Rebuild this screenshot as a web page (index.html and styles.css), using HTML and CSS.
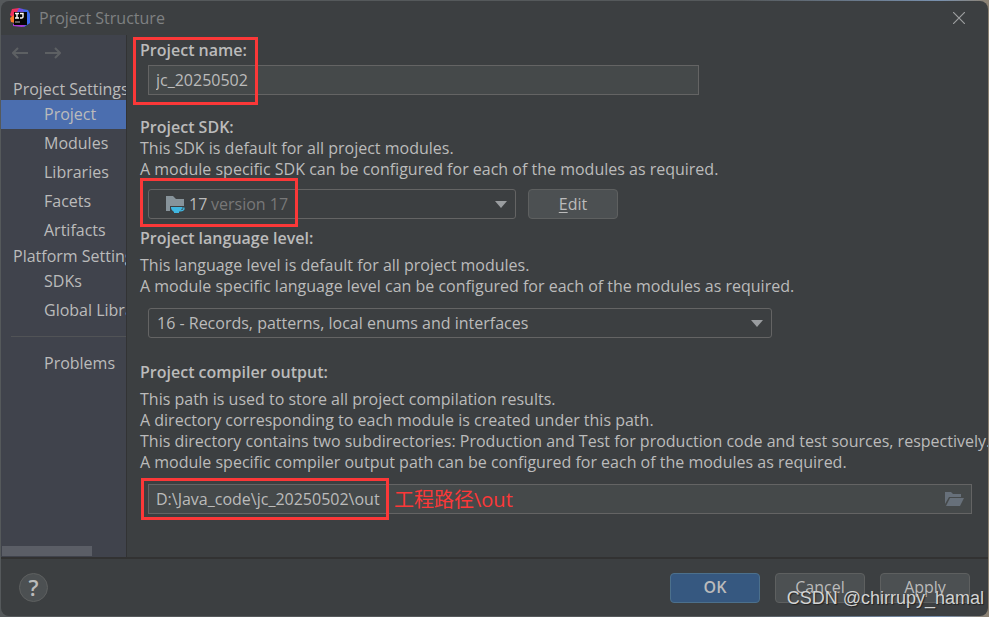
FILE: index.html
```html
<!DOCTYPE html>
<html lang="en">
<head>
    <meta charset="UTF-8">
    <meta name="viewport" content="width=device-width, initial-scale=1.0">
    <title>Project Structure</title>
    <link rel="stylesheet" href="styles.css">
</head>
<body>

<div class="dialog">
    <header class="titlebar">
        <svg class="logo" viewBox="0 0 20 20" width="20" height="20">
            <path d="M2 1 L9 0 L13 4 L8 14 L2 9 L0 7 Z" fill="#f0305f"/>
            <path d="M0 10 L4 7 L5 15 L1 14 Z" fill="#fc7a2b"/>
            <path d="M12 1 L18 2 L20 6 L20 15 L14 19 L8 15 Z" fill="#3b6bf0"/>
            <path d="M3 16 L13 14 L15 18 L12 19 L3 18 Z" fill="#a83ad8"/>
            <path d="M9 0 L13 1 L14 5 L7 4 Z" fill="#6a4fe0"/>
            <rect x="4" y="4" width="13" height="13" fill="#050505"/>
            <path d="M5 5.500 H9 M7 5.500 V10 M5 10 H9 M10 5.500 H13 V9 Q13 10 11.500 10 H10" fill="none" stroke="#fff" stroke-width="1.4"/>
            <path d="M5 14 H10" stroke="#bbb" stroke-width="1.2"/>
        </svg>
        <h1>Project Structure</h1>
        <button class="close-btn" aria-label="Close">
            <svg viewBox="0 0 12 12" width="12" height="12"><path d="M0 0 L12 12 M12 0 L0 12"/></svg>
        </button>
    </header>

    <div class="body">
        <nav class="sidebar">
            <div class="history">
                <button aria-label="Back">
                    <svg viewBox="0 0 16 12" width="16" height="12"><path d="M16 6 H1 M6 1 L1 6 L6 11"/></svg>
                </button>
                <button aria-label="Forward">
                    <svg viewBox="0 0 16 12" width="16" height="12"><path d="M0 6 H15 M10 1 L15 6 L10 11"/></svg>
                </button>
            </div>
            <h2>Project Settings</h2>
            <a class="active" href="#">Project</a>
            <a href="#">Modules</a>
            <a href="#">Libraries</a>
            <a href="#">Facets</a>
            <a href="#">Artifacts</a>
            <h2>Platform Settings</h2>
            <a href="#">SDKs</a>
            <a href="#">Global Libraries</a>
            <hr>
            <a href="#">Problems</a>
            <div class="scrollbar"></div>
        </nav>

        <main class="content">
            <section class="name-section">
                <label for="projectName">Project name:</label>
                <div class="field name-field">
                    <input type="text" id="projectName" value="jc_20250502">
                </div>
                <span class="mark mark-name"></span>
            </section>

            <section>
                <label for="projectSdk">Project SDK:</label>
                <p>This SDK is default for all project modules.<br>
                A module specific SDK can be configured for each of the modules as required.</p>
                <div class="sdk-row">
                    <div class="field sdk-field">
                        <select id="projectSdk">
                            <option>17</option>
                        </select>
                        <svg class="sdk-icon" viewBox="0 0 20 18" width="20" height="18">
                            <path d="M0 0 H7 L10 3 H18 V10 H4 V15 H0 Z" fill="#87939a"/>
                            <path d="M5 11 H16 V12 Q16 14 13 16 V17 H8 V16 Q5 14 5 12 Z" fill="#40b6e0"/>
                            <path d="M15 12 H18 Q18.500 14.500 14 15" fill="none" stroke="#40b6e0" stroke-width="1.2"/>
                        </svg>
                        <span class="sdk-version">version 17</span>
                        <svg class="arrow" viewBox="0 0 12 7" width="12" height="7"><path d="M0 0 H12 L6 7 Z"/></svg>
                        <span class="mark mark-sdk"></span>
                    </div>
                    <button class="btn"><u>E</u>dit</button>
                </div>
            </section>

            <section class="level-section">
                <label for="languageLevel">Project language level:</label>
                <p>This language level is default for all project modules.<br>
                A module specific language level can be configured for each of the modules as required.</p>
                <div class="field level-field">
                    <select id="languageLevel">
                        <option>16 - Records, patterns, local enums and interfaces</option>
                    </select>
                    <svg class="arrow" viewBox="0 0 12 7" width="12" height="7"><path d="M0 0 H12 L6 7 Z"/></svg>
                </div>
            </section>

            <section class="output-section">
                <label for="compilerOutput">Project compiler output:</label>
                <p>This path is used to store all project compilation results.<br>
                A directory corresponding to each module is created under this path.<br>
                This directory contains two subdirectories: Production and Test for production code and test sources, respectively.<br>
                A module specific compiler output path can be configured for each of the modules as required.</p>
                <div class="field">
                    <input type="text" id="compilerOutput" value="D:\Java_code\jc_20250502\out">
                    <button class="browse-btn" aria-label="Browse">
                        <svg viewBox="0 0 20 14" width="20" height="14">
                            <path d="M0 0 H6 L8 2 H16 V5 H4 L0 12 Z"/>
                            <path d="M5 6 H19 L15 14 H1 Z"/>
                        </svg>
                    </button>
                    <span class="mark mark-output"></span>
                    <span class="note">工程路径\out</span>
                </div>
            </section>
        </main>
    </div>

    <footer class="footer">
        <button class="help-btn" aria-label="Help">?</button>
        <button class="btn primary">OK</button>
        <button class="btn">Cancel</button>
        <button class="btn">Apply</button>
        <span class="watermark">CSDN @chirrupy_hamal</span>
    </footer>
</div>

</body>
</html>
```
FILE: styles.css
```css
* {
    box-sizing: border-box;
    margin: 0;
    padding: 0;
}

body {
    min-height: 100vh;
    display: flex;
    padding: 1px;
    background: linear-gradient(to right, #55595b 75%, #7890ae 95%, #8d8272);
    color: #bbbbbb;
    font-family: "Open Sans", "Noto Sans CJK SC", sans-serif;
    font-size: 16px;
    line-height: 21px;
}

input, select, button {
    font: inherit;
    color: inherit;
    border: none;
    background: none;
    outline: none;
}

button {
    cursor: pointer;
}

.dialog {
    flex: 1;
    min-width: 0;
    display: flex;
    flex-direction: column;
    background: #3c3f41;
    border-radius: 8px;
    overflow: hidden;
}

.titlebar {
    display: flex;
    align-items: center;
    gap: 9px;
    height: 34px;
    padding: 0 23px 0 9px;
}

.titlebar h1 {
    flex: 1;
    font-size: 16px;
    font-weight: 400;
    color: #7f8182;
}

.close-btn {
    display: flex;
}

.close-btn path {
    stroke: #9c9e9f;
    stroke-width: 1.2;
}

.body {
    flex: 1;
    display: flex;
}

/* left navigation */
.sidebar {
    flex: 0 0 126px;
    display: flex;
    flex-direction: column;
    overflow: hidden;
    background: #40434c;
    border-right: 1px solid #323334;
    white-space: nowrap;
}

.history {
    display: flex;
    gap: 17px;
    height: 43px;
    padding: 12px 11px;
}

.history button {
    display: flex;
}

.history path {
    fill: none;
    stroke: #5d6063;
    stroke-width: 2;
}

.sidebar h2 {
    padding-left: 12px;
    font-size: 16px;
    font-weight: 400;
    line-height: 22px;
}

.sidebar a {
    padding-left: 43px;
    line-height: 29px;
    color: inherit;
    text-decoration: none;
}

.sidebar a.active {
    background: #4b6eaf;
}

.sidebar hr {
    margin: 11px 0 12px 10px;
    border: none;
    border-top: 1px solid #515356;
}

.scrollbar {
    width: 90px;
    height: 10px;
    margin: auto 0 1px 1px;
    background: #5b5e66;
}

/* settings form */
.content {
    flex: 1;
    min-width: 0;
    padding: 5px 12px 42px 13px;
}

.content section {
    position: relative;
    margin-bottom: 22px;
}

.content label {
    display: block;
    font-weight: 600;
}

.content p {
    white-space: nowrap;
}

.content .level-section {
    margin: -13px 0 24px;
}

.content .output-section {
    margin: 0;
}

.level-section p,
.output-section p {
    margin-top: 6px;
}

.field {
    position: relative;
    display: flex;
    align-items: center;
    height: 30px;
    margin: 11px 4px 0 8px;
    border: 1px solid #646464;
    background: #45494a;
}

.field input {
    flex: 1;
    min-width: 0;
    padding: 0 7px;
}

.field select {
    flex: 1;
    min-width: 0;
    padding: 0 8px;
    appearance: none;
}

.name-field {
    max-width: 551px;
    margin-top: 4px;
}

.sdk-row {
    display: flex;
    gap: 12px;
    margin: 9px 0 0 8px;
}

.sdk-field {
    flex: 0 1 368px;
    margin: 0;
    border-radius: 3px;
    background: none;
}

.field.sdk-field select {
    padding-left: 40px;
}

.sdk-icon {
    position: absolute;
    left: 17px;
    top: 6px;
}

.sdk-version {
    position: absolute;
    left: 62px;
    color: #787878;
    pointer-events: none;
}

.level-field {
    max-width: 624px;
    border-radius: 3px;
    background: none;
}

.arrow {
    position: absolute;
    right: 8px;
    fill: #9a9da0;
    pointer-events: none;
}

.browse-btn {
    display: flex;
    margin-right: 6px;
}

.browse-btn path {
    fill: #67707a;
}

.btn {
    width: 90px;
    height: 30px;
    border: 1px solid #5e6060;
    border-radius: 4px;
    background: #4c5052;
}

.btn.primary {
    border-color: #4c708c;
    background: #365880;
    font-weight: 600;
}

.btn u {
    text-underline-offset: 2px;
}

/* red call-outs over the form */
.mark {
    position: absolute;
    border: 3px solid #fb3838;
    pointer-events: none;
}

.mark-name {
    left: -7px;
    top: -3px;
    width: 125px;
    height: 68px;
}

.mark-sdk {
    left: -9px;
    top: -12px;
    width: 158px;
    height: 49px;
}

.mark-output {
    left: -8px;
    top: -7px;
    width: 248px;
    height: 42px;
}

.note {
    position: absolute;
    left: 245px;
    color: #fb3838;
    font-size: 20px;
    pointer-events: none;
}

/* bottom buttons */
.footer {
    position: relative;
    display: flex;
    align-items: center;
    gap: 15px;
    height: 59px;
    padding: 0 18px;
    border-top: 2px solid #323232;
}

.help-btn {
    width: 29px;
    height: 29px;
    margin-right: auto;
    border: 1px solid #5e6060;
    border-radius: 50%;
    background: #4c5052;
    font-size: 22px;
    font-weight: 600;
}

.watermark {
    position: absolute;
    right: 4px;
    bottom: 7px;
    color: #d2d3d3;
    font-family: "Liberation Sans", Arial, sans-serif;
    font-size: 18px;
    text-shadow: 1px 1px 1px #222;
    pointer-events: none;
}
```
